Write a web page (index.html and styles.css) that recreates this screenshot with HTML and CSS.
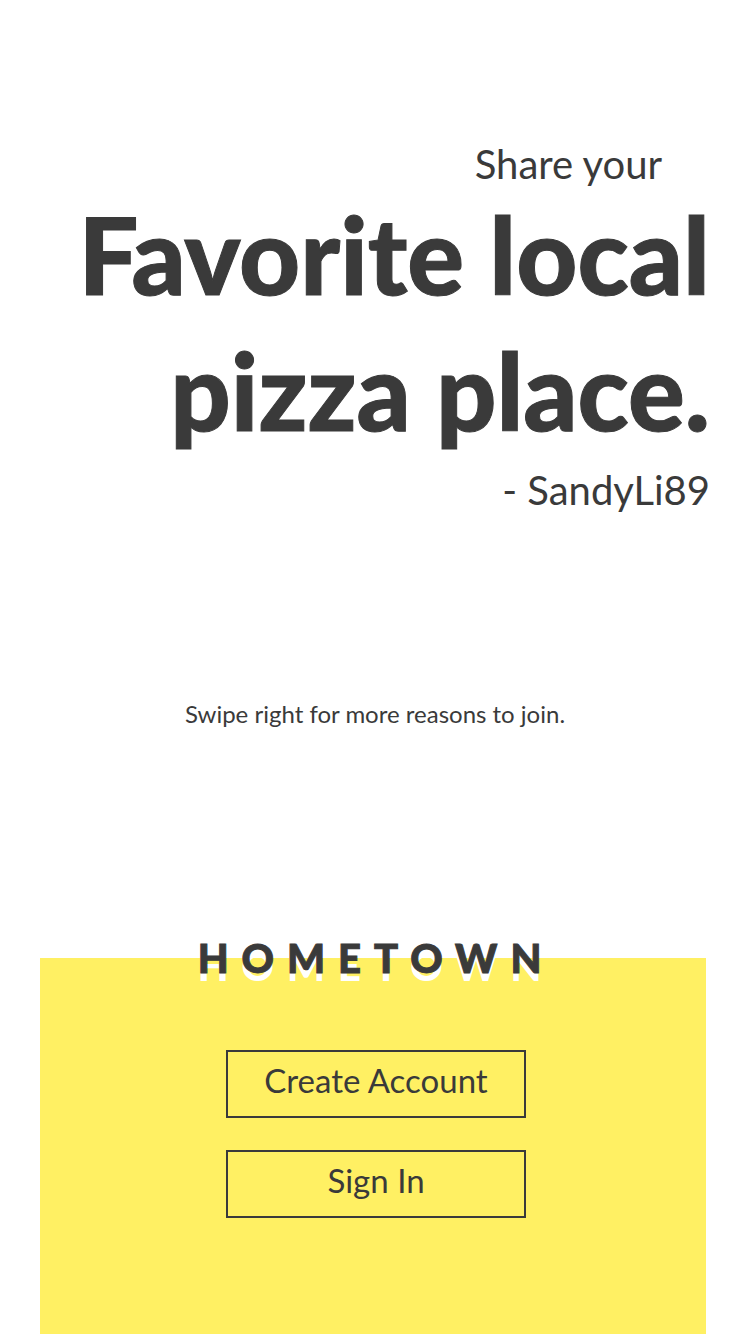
FILE: index.html
```html
<!DOCTYPE html>
<html lang="en">
<head>
<meta charset="utf-8">
<meta name="viewport" content="width=device-width, initial-scale=1">
<title>Hometown</title>
<link rel="stylesheet" href="styles.css">
</head>
<body>
<main class="welcome">
  <section class="quote">
    <p class="lead">Share your</p>
    <h1 class="headline">Favorite local<br>pizza place.</h1>
    <p class="author">- SandyLi89</p>
  </section>
  <p class="hint">Swipe right for more reasons to join.</p>
  <section class="join">
    <h2 class="brand">HOMETOWN</h2>
    <div class="actions">
      <button class="action" type="button">Create Account</button>
      <button class="action" type="button">Sign In</button>
    </div>
  </section>
</main>
</body>
</html>
```
FILE: styles.css
```css
* {
  box-sizing: border-box;
}

body {
  margin: 0;
  background: #fff;
  color: #3a3a3a;
  font-family: Lato, "Open Sans", sans-serif;
}

p,
h1,
h2 {
  margin: 0;
}

.welcome {
  display: flex;
  flex-direction: column;
  min-height: 100vh;
}

.quote {
  padding: 136px 40px 0;
  text-align: right;
}

.lead,
.author {
  font-size: 40px;
  line-height: 56px;
}

.lead {
  padding-right: 48px;
}

.headline {
  margin: -6px 0 4px;
  font-size: 106px;
  font-weight: 900;
  line-height: 136px;
  -webkit-text-stroke: 1px currentColor;
}

.hint {
  padding: 180px 40px 0;
  font-size: 24px;
  line-height: 32px;
  text-align: center;
}

.join {
  display: flex;
  flex: 1;
  flex-direction: column;
  align-items: center;
  margin: 228px 44px 0 40px;
  padding-left: 6px;
  background: #fff063;
}

.brand {
  margin-top: -24px;
  font-size: 40px;
  font-weight: 900;
  line-height: 48px;
  letter-spacing: 13px;
  text-shadow: 0 8px 0 #fff;
  -webkit-text-stroke: 1px currentColor;
}

.actions {
  display: grid;
  gap: 32px;
  padding: 68px 0 116px;
}

.action {
  width: 300px;
  height: 68px;
  padding: 0 0 8px;
  border: 2px solid #3a3a3a;
  background: transparent;
  color: inherit;
  font: inherit;
  font-size: 33px;
}
```
